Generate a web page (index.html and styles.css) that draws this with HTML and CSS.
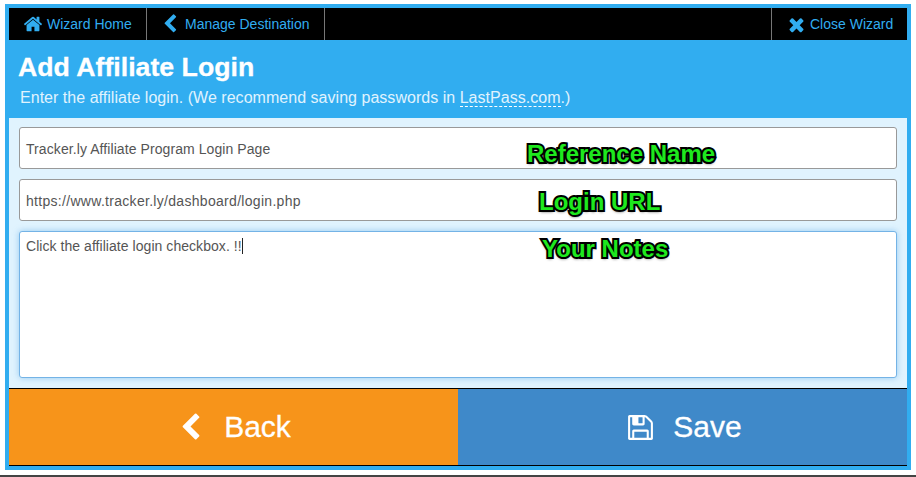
FILE: index.html
```html
<!DOCTYPE html>
<html>

	<head>
		<meta charset="UTF-8">
		<title>Add Affiliate Login</title>
		<link rel="stylesheet" href="styles.css">
	</head>

	<body>
		<div class="wizard">
			<div class="nav">
				<a class="navItem home" href="##">
					<svg class="navIcon" viewBox="0 0 1792 1792"><path d="M1472 992v480q0 26-19 45t-45 19h-384v-384h-256v384h-384q-26 0-45-19t-19-45v-480q0-1 .5-3t.5-3l575-474 575 474q1 2 1 6zm223-69l-62 74q-8 9-21 11h-3q-13 0-21-7l-692-577-692 577q-12 8-24 7-13-2-21-11l-62-74q-8-10-7-23.5t11-21.5l719-599q32-26 76-26t76 26l244 204v-195q0-14 9-23t23-9h192q14 0 23 9t9 23v408l219 182q10 8 11 21.5t-7 23.5z"/></svg>
					Wizard Home
				</a>
				<a class="navItem manage" href="##">
					<svg class="navIcon" viewBox="0 0 1792 1792"><path d="M1427 301l-531 531 531 531q19 19 19 45t-19 45l-166 166q-19 19-45 19t-45-19l-742-742q-19-19-19-45t19-45l742-742q19-19 45-19t45 19l166 166q19 19 19 45t-19 45z"/></svg>
					Manage Destination
				</a>
				<a class="navItem close" href="##">
					<svg class="navIcon closeIcon" viewBox="0 0 1792 1792"><path d="M1490 1322q0 40-28 68l-136 136q-28 28-68 28t-68-28l-294-294-294 294q-28 28-68 28t-68-28l-136-136q-28-28-28-68t28-68l294-294-294-294q-28-28-28-68t28-68l136-136q28-28 68-28t68 28l294 294 294-294q28-28 68-28t68 28l136 136q28 28 28 68t-28 68l-294 294 294 294q28 28 28 68z"/></svg>
					Close Wizard
				</a>
			</div>

			<div class="head">
				<h1>Add Affiliate Login</h1>
				<p>Enter the affiliate login. (We recommend saving passwords in <a href="##">LastPass.com</a>.)</p>
			</div>

			<div class="form">
				<div class="field">Tracker.ly Affiliate Program Login Page</div>
				<div class="field url">https://www.tracker.ly/dashboard/login.php</div>
				<div class="field notes">Click the affiliate login checkbox. !!<span class="caret"></span></div>
				<span class="tag tagName">Reference Name</span>
				<span class="tag tagUrl">Login URL</span>
				<span class="tag tagNotes">Your Notes</span>
			</div>

			<div class="actions">
				<a class="action back" href="##">
					<svg class="actionIcon" viewBox="0 0 1792 1792"><path d="M1427 301l-531 531 531 531q19 19 19 45t-19 45l-166 166q-19 19-45 19t-45-19l-742-742q-19-19-19-45t19-45l742-742q19-19 45-19t45 19l166 166q19 19 19 45t-19 45z"/></svg>
					Back
				</a>
				<a class="action save" href="##">
					<svg class="actionIcon" viewBox="0 0 1792 1792"><path d="M512 1536h768v-384h-768v384zm896 0h128v-896q0-14-10-38.500t-20-34.500l-281-281q-10-10-34-20t-39-10v416q0 40-28 68t-68 28h-576q-40 0-68-28t-28-68v-416h-128v1280h128v-416q0-40 28-68t68-28h832q40 0 68 28t28 68v416zm-384-928v-320q0-13-9.500-22.500t-22.500-9.500h-192q-13 0-22.500 9.500t-9.500 22.500v320q0 13 9.500 22.500t22.500 9.500h192q13 0 22.500-9.500t9.500-22.500zm640 32v928q0 40-28 68t-68 28h-1344q-40 0-68-28t-28-68v-1344q0-40 28-68t68-28h928q40 0 88 20t76 48l280 280q28 28 48 76t20 88z"/></svg>
					Save
				</a>
			</div>
		</div>
		<div class="desk"></div>
	</body>

</html>
```

FILE: styles.css
```css
* {
	margin: 0;
	padding: 0;
	box-sizing: border-box;
}

html,
body {
	height: 100%;
	overflow: hidden;
}

body {
	display: flex;
	flex-direction: column;
	background: #fff;
	font-family: "Liberation Sans", Arial, sans-serif;
}

a {
	text-decoration: none;
}

.wizard {
	height: 466px;
	margin: 4px 5px 0 5px;
	border: 4px solid #31adf0;
	display: flex;
	flex-direction: column;
	background: #31adf0;
}

.desk {
	height: 2px;
	margin-top: 5px;
	background: #444;
}

/* top bar */
.nav {
	height: 32px;
	background: #000;
	display: flex;
	flex: none;
}

.navItem {
	display: flex;
	align-items: center;
	gap: 4px;
	color: #31adf0;
	font-size: 14px;
}

.navIcon {
	width: 20px;
	height: 20px;
	fill: #31adf0;
	flex: none;
}

.closeIcon {
	width: 21px;
	height: 21px;
}

.home {
	width: 138px;
	padding-left: 14px;
	border-right: 1px solid #777;
}

.manage {
	width: 178px;
	padding-left: 13px;
	border-right: 1px solid #777;
	gap: 5px;
}

.close {
	width: 136px;
	margin-left: auto;
	padding-left: 14px;
	border-left: 1px solid #777;
	gap: 3px;
}

/* heading */
.head {
	height: 78px;
	flex: none;
	padding: 12px 9px 0;
	color: #fff;
}

.head h1 {
	font-size: 26.7px;
	line-height: 30px;
	font-weight: bold;
	-webkit-text-stroke: 0.3px #fff;
}

.head p {
	margin-top: 7px;
	padding-left: 2px;
	font-size: 16px;
	letter-spacing: 0.03px;
	line-height: 18px;
	color: #e0f3fe;
}

.head p a {
	color: #e0f3fe;
	border-bottom: 1px dashed #fff;
}

/* form */
.form {
	position: relative;
	height: 270px;
	flex: none;
	padding: 9px 10px 0;
	background: #e0f3fe;
	display: flex;
	flex-direction: column;
	gap: 10px;
}

.field {
	height: 42px;
	flex: none;
	padding: 0 6px;
	background: #fff;
	border: 1px solid #999;
	border-radius: 3px;
	color: #555;
	font-size: 14px;
	letter-spacing: 0.08px;
	line-height: 43px;
}

.url {
	letter-spacing: 0.3px;
}

.notes {
	height: 147px;
	padding-top: 6px;
	letter-spacing: 0.05px;
	line-height: 17px;
	border-color: #74b3e6;
	box-shadow: 0 0 6px rgba(102, 175, 233, 0.6);
}

.caret {
	display: inline-block;
	height: 16px;
	border-left: 1px solid #222;
	vertical-align: top;
}

.tag {
	position: absolute;
	font-size: 24px;
	line-height: 28px;
	font-weight: bold;
	color: #1ee81e;
	-webkit-text-stroke: 4px #000;
	paint-order: stroke fill;
	text-shadow: 0 2px 3px rgba(0, 0, 0, 0.6);
	white-space: nowrap;
}

.tagName {
	left: 518px;
	top: 22px;
}

.tagUrl {
	left: 530px;
	top: 70px;
}

.tagNotes {
	left: 533px;
	top: 117px;
}

/* bottom buttons */
.actions {
	height: 78px;
	flex: none;
	display: flex;
	border-top: 1px solid #000;
	border-bottom: 1px solid #000;
}

.action {
	flex: 0 0 50%;
	display: flex;
	align-items: center;
	justify-content: center;
	gap: 19px;
	color: #fff;
	font-size: 30px;
	-webkit-text-stroke: 0.3px #fff;
}

.actionIcon {
	width: 29px;
	height: 29px;
	fill: #fff;
}

.back {
	background: #f7941a;
}

.save {
	background: #3f89c9;
	gap: 18px;
	padding-left: 3px;
}
```
